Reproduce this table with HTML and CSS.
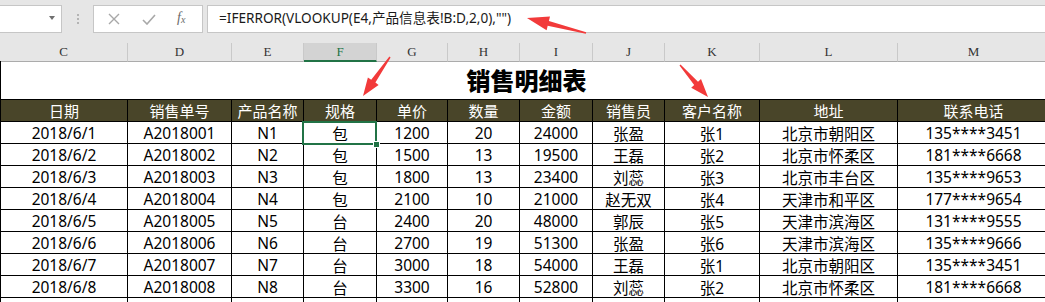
FILE: index.html
```html
<!DOCTYPE html>
<html lang="zh-CN">
<head>
<meta charset="utf-8">
<title>销售明细表</title>
<link rel="stylesheet" href="styles.css">
</head>
<body>
<div class="app">
  <div class="fbar">
    <div class="namebox"><span class="dd"></span></div>
    <div class="grip"><i></i><i></i><i></i></div>
    <div class="tools">
      <svg class="ico" width="12" height="12" viewBox="0 0 12 12"><path d="M1 1L11 11M11 1L1 11" stroke="#a8a8a8" stroke-width="1.4" fill="none"/></svg>
      <svg class="ico" width="14" height="11" viewBox="0 0 14 11"><path d="M1 6L5 10L13 1" stroke="#a8a8a8" stroke-width="1.6" fill="none"/></svg>
      <span class="fx">f<sub>x</sub></span>
    </div>
    <div class="formula">=IFERROR(VLOOKUP(E4,产品信息表!B:D,2,0),"")</div>
  </div>

  <div class="colhead">
    <div class="ch">C</div><div class="ch">D</div><div class="ch">E</div><div class="ch sel">F</div><div class="ch">G</div><div class="ch">H</div><div class="ch">I</div><div class="ch">J</div><div class="ch">K</div><div class="ch">L</div><div class="ch">M</div>
  </div>

  <div class="sheet">
    <div class="title">销售明细表</div>
    <div class="hd">日期</div><div class="hd">销售单号</div><div class="hd">产品名称</div><div class="hd">规格</div><div class="hd">单价</div><div class="hd">数量</div><div class="hd">金额</div><div class="hd">销售员</div><div class="hd">客户名称</div><div class="hd">地址</div><div class="hd">联系电话</div>

    <div class="c">2018/6/1</div><div class="c">A2018001</div><div class="c">N1</div><div class="c active">包</div><div class="c">1200</div><div class="c">20</div><div class="c">24000</div><div class="c">张盈</div><div class="c">张1</div><div class="c">北京市朝阳区</div><div class="c">135****3451</div>
    <div class="c">2018/6/2</div><div class="c">A2018002</div><div class="c">N2</div><div class="c">包</div><div class="c">1500</div><div class="c">13</div><div class="c">19500</div><div class="c">王磊</div><div class="c">张2</div><div class="c">北京市怀柔区</div><div class="c">181****6668</div>
    <div class="c">2018/6/3</div><div class="c">A2018003</div><div class="c">N3</div><div class="c">包</div><div class="c">1800</div><div class="c">13</div><div class="c">23400</div><div class="c">刘蕊</div><div class="c">张3</div><div class="c">北京市丰台区</div><div class="c">135****9653</div>
    <div class="c">2018/6/4</div><div class="c">A2018004</div><div class="c">N4</div><div class="c">包</div><div class="c">2100</div><div class="c">10</div><div class="c">21000</div><div class="c">赵无双</div><div class="c">张4</div><div class="c">天津市和平区</div><div class="c">177****9654</div>
    <div class="c">2018/6/5</div><div class="c">A2018005</div><div class="c">N5</div><div class="c">台</div><div class="c">2400</div><div class="c">20</div><div class="c">48000</div><div class="c">郭辰</div><div class="c">张5</div><div class="c">天津市滨海区</div><div class="c">131****9555</div>
    <div class="c">2018/6/6</div><div class="c">A2018006</div><div class="c">N6</div><div class="c">台</div><div class="c">2700</div><div class="c">19</div><div class="c">51300</div><div class="c">张盈</div><div class="c">张6</div><div class="c">天津市滨海区</div><div class="c">135****9666</div>
    <div class="c">2018/6/7</div><div class="c">A2018007</div><div class="c">N7</div><div class="c">台</div><div class="c">3000</div><div class="c">18</div><div class="c">54000</div><div class="c">王磊</div><div class="c">张1</div><div class="c">北京市朝阳区</div><div class="c">135****3451</div>
    <div class="c">2018/6/8</div><div class="c">A2018008</div><div class="c">N8</div><div class="c">台</div><div class="c">3300</div><div class="c">16</div><div class="c">52800</div><div class="c">刘蕊</div><div class="c">张2</div><div class="c">北京市怀柔区</div><div class="c">181****6668</div>
    <div class="c"></div><div class="c"></div><div class="c"></div><div class="c"></div><div class="c"></div><div class="c"></div><div class="c"></div><div class="c"></div><div class="c"></div><div class="c"></div><div class="c"></div>
  </div>

  <svg class="arrows" width="1045" height="302" viewBox="0 0 1045 302">
    <polygon points="586.2,32.3 548.9,21.0 550.0,16.6 527,18 546.6,30.2 547.7,25.8 585.8,33.7" />
    <polygon points="389.4,56.6 371.2,79.8 367.9,77.5 363,96 378.6,84.9 375.4,82.6 390.6,57.4" />
    <polygon points="679.5,65.5 694.2,85.0 691.2,87.7 708,97 701.0,79.1 698.0,81.8 680.5,64.5" />
  </svg>
</div>
</body>
</html>
```

FILE: styles.css
```css
html, body {
  margin: 0;
  padding: 0;
  background: #fff;
  overflow: hidden;
}
.app {
  --cols: 128px 104px 72px 73px 71px 72px 73px 72px 95px 138px 152px;
  position: relative;
  width: 1045px;
  height: 302px;
  overflow: hidden;
  font-family: "Noto Sans", "Noto Sans CJK SC", sans-serif;
}

/* formula bar */
.fbar {
  height: 43px;
  box-sizing: border-box;
  background: #e6e6e6;
  display: flex;
  align-items: flex-start;
  padding-top: 5px;
}
.namebox {
  width: 62px;
  height: 28px;
  box-sizing: border-box;
  background: #fff;
  border: 1px solid #c6c6c6;
  border-left: none;
  position: relative;
  display: flex;
  justify-content: flex-end;
  align-items: center;
  padding-right: 6px;
}
.dd {
  width: 0;
  height: 0;
  border-left: 3.5px solid transparent;
  border-right: 3.5px solid transparent;
  border-top: 4px solid #6f6f6f;
  margin-top: -3px;
}
.grip {
  width: 31px;
  height: 28px;
  display: flex;
  flex-direction: column;
  align-items: center;
  justify-content: center;
  gap: 2px;
}
.grip i {
  display: block;
  width: 2px;
  height: 2px;
  background: #b4b4b4;
}
.tools {
  width: 110px;
  height: 28px;
  box-sizing: border-box;
  background: #fff;
  border: 1px solid #c6c6c6;
  display: flex;
  align-items: center;
  padding-left: 14px;
}
.tools .ico:first-child { margin-right: 22px; }
.tools .ico:nth-child(2) { margin-right: 21px; }
.fx {
  font-family: "Liberation Serif", serif;
  font-style: italic;
  font-size: 14px;
  color: #6a6a6a;
  line-height: 1;
  margin-top: -3px;
}
.fx sub {
  font-size: 10px;
  vertical-align: -1px;
}
.formula {
  flex: 1;
  margin-left: 4px;
  height: 28px;
  box-sizing: border-box;
  background: #fff;
  border: 1px solid #c6c6c6;
  border-right: none;
  padding-left: 11px;
  font-size: 13.6px;
  line-height: 24px;
  color: #1a1a1a;
  white-space: nowrap;
}

/* column headers */
.colhead {
  display: grid;
  grid-template-columns: var(--cols);
  height: 18px;
  background: #e6e6e6;
}
.ch {
  box-sizing: border-box;
  border-right: 1px solid #c9c9c9;
  border-bottom: 1px solid #ababab;
  font-family: "Liberation Serif", serif;
  font-size: 13px;
  color: #333;
  text-align: center;
  line-height: 17px;
}
.ch.sel {
  background: #d3d3d3;
  color: #217346;
  border-bottom: 2px solid #217346;
}

/* sheet */
.sheet {
  display: grid;
  grid-template-columns: var(--cols);
  grid-template-rows: 39px;
  grid-auto-rows: 22px;
}
.title {
  grid-column: 1 / -1;
  box-sizing: border-box;
  border-left: 1px solid #000;
  border-bottom: 1px solid #000;
  font-family: "Noto Sans CJK SC", sans-serif;
  font-weight: 900;
  font-size: 24px;
  line-height: 38px;
  text-align: center;
  color: #000;
  padding-left: 2px;
}
.hd, .c {
  box-sizing: border-box;
  border-right: 1px solid #000;
  border-bottom: 1px solid #000;
  display: flex;
  align-items: center;
  justify-content: center;
  white-space: nowrap;
  position: relative;
}
.hd:nth-child(11n+2), .c:nth-child(11n+2) {
  border-left: 1px solid #000;
}
.hd {
  background: #494529;
  color: #fff;
  font-family: "Noto Sans CJK SC", sans-serif;
  font-size: 15px;
}
.c {
  color: #000;
  font-size: 15.5px;
  padding-top: 1px;
}
.c.active::after {
  content: "";
  position: absolute;
  left: -2px;
  top: -1px;
  right: -1px;
  bottom: -2px;
  border: 2px solid #217346;
  z-index: 2;
}
.c.active::before {
  content: "";
  position: absolute;
  right: -4px;
  bottom: -5px;
  width: 5px;
  height: 5px;
  background: #217346;
  border: 1px solid #fff;
  z-index: 3;
}

.arrows {
  position: absolute;
  left: 0;
  top: 0;
  pointer-events: none;
  z-index: 5;
}
.arrows polygon {
  fill: #f23a3a;
}
```
